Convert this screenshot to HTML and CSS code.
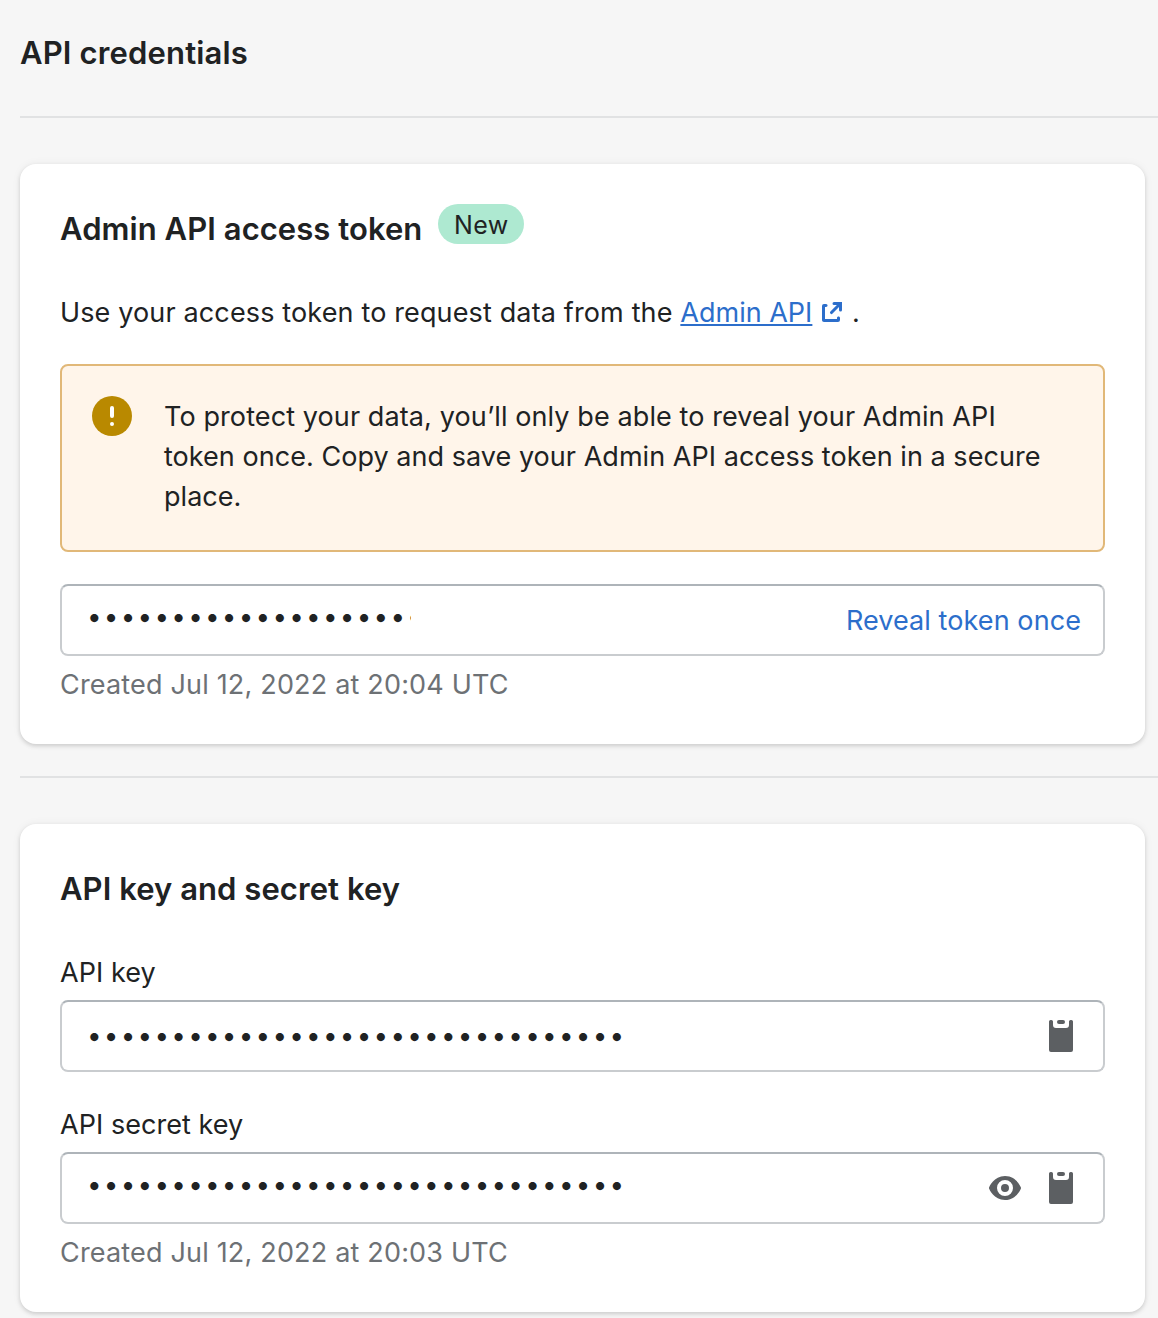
FILE: index.html
```html
<!DOCTYPE html>
<html lang="en">
<head>
<meta charset="utf-8">
<title>API credentials</title>
<link rel="stylesheet" href="styles.css">
</head>
<body>
<svg class="sprite" aria-hidden="true">
  <symbol id="clipboard" viewBox="0 0 12 16">
    <path d="M0 .8A.8.8 0 0 1 .8 0h.4a.8.8 0 0 1 .8.8V2.5A1.5 1.5 0 0 0 3.5 4h5A1.5 1.5 0 0 0 10 2.5V.8a.8.8 0 0 1 .8-.8h.4a.8.8 0 0 1 .8.8V15a1 1 0 0 1-1 1H1a1 1 0 0 1-1-1z"/>
    <rect x="4" y="0" width="4" height="2" rx="1"/>
  </symbol>
</svg>
<main class="page">
  <h1 class="heading page-title">API credentials</h1>

  <section class="section">
    <div class="card">
      <div class="title-row">
        <h2 class="heading">Admin API access token</h2>
        <span class="badge">New</span>
      </div>
      <p class="text intro">Use your access token to request data from the <a class="link" href="#">Admin API</a><svg class="external" viewBox="5 5 10 10"><path d="M14 13v1a1 1 0 0 1-1 1H6c-.575 0-1-.484-1-1V7a1 1 0 0 1 1-1h1c1.037 0 1.04 1.5 0 1.5H6.5v6h6V13c0-1 1.5-1 1.5 0zm-3.75-7.25A.75.75 0 0 1 11 5h4v4a.75.75 0 0 1-1.5 0V7.56l-3.22 3.22a.75.75 0 1 1-1.06-1.06l3.22-3.22H11a.75.75 0 0 1-.75-.75z"/></svg> .</p>
      <div class="banner">
        <svg class="alert" viewBox="0 0 20 20"><circle cx="10" cy="10" r="10" fill="#b98900"/><path d="M10 6v4" stroke="#fff" stroke-width="2" stroke-linecap="round"/><circle cx="10" cy="14" r="1" fill="#fff"/></svg>
        <p class="banner-text"><span class="banner-lead">To protect your data, you’ll only be able to reveal your Admin API</span><br>token once. Copy and save your Admin API access token in a secure<br>place.</p>
      </div>
      <div class="field">
        <span class="dots dots-raised dots-clipped">••••••••••••••••••••</span>
        <a class="reveal" href="#">Reveal token once</a>
      </div>
      <p class="text help">Created Jul 12, 2022 at 20:04 UTC</p>
    </div>
  </section>

  <section class="section">
    <div class="card">
      <div class="title-row">
        <h2 class="heading">API key and secret key</h2>
      </div>
      <p class="text label">API key</p>
      <div class="field">
        <span class="dots">••••••••••••••••••••••••••••••••</span>
        <span class="actions"><svg class="clip"><use href="#clipboard"/></svg></span>
      </div>
      <p class="text label label-next">API secret key</p>
      <div class="field">
        <span class="dots dots-raised">••••••••••••••••••••••••••••••••</span>
        <span class="actions">
          <svg class="eye" viewBox="2 4 16 12"><path d="M17.928 9.628C17.837 9.399 15.611 4 10 4S2.162 9.399 2.07 9.628a1.017 1.017 0 0 0 0 .744C2.163 10.601 4.389 16 10 16s7.837-5.399 7.928-5.628a1.017 1.017 0 0 0 0-.744zM10 14a4 4 0 1 1 0-8 4 4 0 0 1 0 8zm0-6a2 2 0 1 0 0 4 2 2 0 0 0 0-4z"/></svg>
          <svg class="clip"><use href="#clipboard"/></svg>
        </span>
      </div>
      <p class="text help">Created Jul 12, 2022 at 20:03 UTC</p>
    </div>
  </section>
</main>
</body>
</html>
```
FILE: styles.css
```css
* { box-sizing: border-box; }

body {
  margin: 0;
  background: #f6f6f6;
  color: #202223;
  font: 400 27px/40px Inter, sans-serif;
  overflow: hidden;
}

p, h1, h2 { margin: 0; }

.sprite { display: none; }

.page { padding: 28px 0 6px 20px; }

.heading {
  padding-top: 1px;
  height: 48px;
  font-size: 31px;
  font-weight: 600;
  line-height: 48px;
  letter-spacing: 0.06px;
}

.page-title { letter-spacing: 0.16px; }

.section {
  margin-top: 32px;
  padding-top: 46px;
  border-top: 2px solid #e1e2e3;
}

.page-title + .section { margin-top: 40px; }

.card {
  width: 1125px;
  padding: 40px;
  border-radius: 16px;
  background: #fff;
  box-shadow: 0 0 10px rgba(23, 24, 24, 0.05), 0 2px 4px rgba(0, 0, 0, 0.15);
}

.title-row {
  display: flex;
  align-items: flex-start;
  gap: 16px;
  margin-bottom: 40px;
}

.badge {
  width: 86px;
  height: 40px;
  padding-top: 1px;
  border-radius: 20px;
  background: #aee9d1;
  font-size: 25px;
  letter-spacing: 0.4px;
  text-align: center;
}

.text { height: 40px; padding-top: 1px; }

.intro { letter-spacing: 0.14px; white-space: nowrap; }

.link {
  color: #2c6ecb;
  letter-spacing: 0;
  text-decoration: underline 2px;
  text-underline-offset: 2px;
}

.external {
  width: 20px;
  height: 20px;
  margin: 0 2px 0 10px;
  fill: #2c6ecb;
}

.banner {
  display: flex;
  gap: 32px;
  margin: 32px 0;
  padding: 30px 30px 33px;
  border: 2px solid #e1b878;
  border-radius: 8px;
  background: #fff5ea;
}

.alert { flex: none; width: 40px; height: 40px; }

.banner-text {
  padding-top: 1px;
  letter-spacing: 0.04px;
  white-space: nowrap;
}

.banner-lead { letter-spacing: 0.1px; }

.field {
  display: flex;
  align-items: center;
  justify-content: space-between;
  height: 72px;
  padding: 0 22px 0 25px;
  border: 2px solid #c9cccf;
  border-top-color: #aeb4b9;
  border-radius: 8px;
}

.dots {
  font-size: 26px;
  letter-spacing: 2.23px;
  white-space: nowrap;
}

.dots-raised { padding-bottom: 6px; }

.dots-clipped { width: 324px; overflow: hidden; }

.reveal {
  padding-top: 2px;
  color: #2c6ecb;
  letter-spacing: 0.08px;
  text-decoration: none;
}

.actions {
  display: flex;
  align-items: center;
  gap: 28px;
  padding-right: 8px;
  fill: #5c5f62;
}

.clip { width: 24px; height: 32px; }

.eye { width: 32px; height: 24px; }

.label { margin-bottom: 8px; letter-spacing: 0.05px; }

.label-next { margin-top: 32px; }

.help {
  margin-top: 8px;
  color: #6d7175;
  letter-spacing: 0.18px;
}
```
